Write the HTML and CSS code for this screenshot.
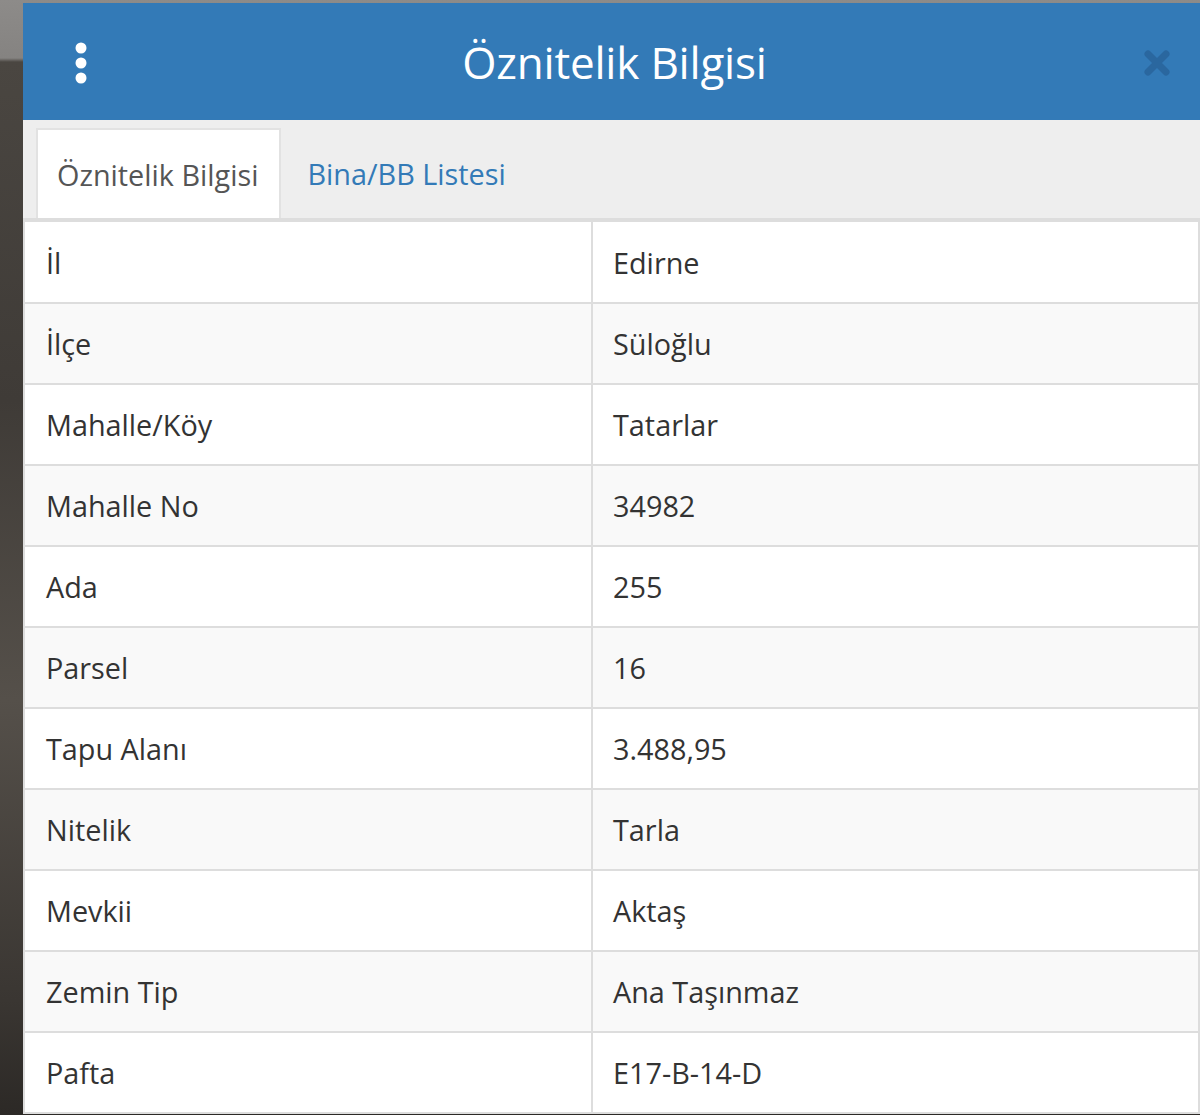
FILE: index.html
```html
<!DOCTYPE html>
<html lang="tr">
<head>
<meta charset="utf-8">
<title>Öznitelik Bilgisi</title>
<link rel="stylesheet" href="styles.css">
</head>
<body>
<div class="backdrop">
  <div class="panel">
    <div class="header">
      <button class="menu-btn" aria-label="Menü">
        <svg width="14" height="42" viewBox="0 0 14 42"><circle cx="7" cy="6" r="5.5" fill="#fff"/><circle cx="7" cy="21" r="5.5" fill="#fff"/><circle cx="7" cy="36" r="5.5" fill="#fff"/></svg>
      </button>
      <h1 class="title">Öznitelik Bilgisi</h1>
      <button class="close-btn" aria-label="Kapat">
        <svg width="28" height="28" viewBox="0 0 28 28"><path d="M5 5 L23 23 M23 5 L5 23" stroke="#2a679f" stroke-width="7" stroke-linecap="round"/></svg>
      </button>
    </div>
    <div class="tabs">
      <div class="tab active">Öznitelik Bilgisi</div>
      <div class="tab">Bina/BB Listesi</div>
    </div>
    <table class="attrs">
      <tbody>
        <tr><td>İl</td><td>Edirne</td></tr>
        <tr><td>İlçe</td><td>Süloğlu</td></tr>
        <tr><td>Mahalle/Köy</td><td>Tatarlar</td></tr>
        <tr><td>Mahalle No</td><td>34982</td></tr>
        <tr><td>Ada</td><td>255</td></tr>
        <tr><td>Parsel</td><td>16</td></tr>
        <tr><td>Tapu Alanı</td><td>3.488,95</td></tr>
        <tr><td>Nitelik</td><td>Tarla</td></tr>
        <tr><td>Mevkii</td><td>Aktaş</td></tr>
        <tr><td>Zemin Tip</td><td>Ana Taşınmaz</td></tr>
        <tr><td>Pafta</td><td>E17-B-14-D</td></tr>
      </tbody>
    </table>
  </div>
</div>
</body>
</html>
```

FILE: styles.css
```css
html, body {
  margin: 0;
  padding: 0;
  height: 100%;
  overflow: hidden;
}
body {
  font-family: "Open Sans", "Liberation Sans", sans-serif;
  color: #333;
}
.backdrop {
  height: 100%;
  box-sizing: border-box;
  padding: 3px 0 0 23px;
  background:
    linear-gradient(180deg, #8d8b89 0, #858381 58px, #4a4641 62px, #3f3b37 400px, #55504a 700px, #3a3632 1000px, #2c2926 1115px);
}
.panel {
  width: 1177px;
  background: #fff;
}
.header {
  height: 117px;
  background: #337ab7;
  display: flex;
  align-items: center;
  justify-content: space-between;
  padding: 0 29px 0 51px;
  box-sizing: border-box;
}
.menu-btn, .close-btn {
  background: none;
  border: 0;
  padding: 0;
  display: flex;
  cursor: pointer;
}
.menu-btn { margin-top: 2px; }
.close-btn { margin-top: 2px; }
.title {
  margin: 0;
  color: #fff;
  font-size: 44px;
  font-weight: 500;
  letter-spacing: -0.2px;
  line-height: 1;
  padding-right: 2px;
}
.tabs {
  height: 102px;
  background: #eee;
  box-sizing: border-box;
  border-bottom: 4px solid #ddd;
  display: flex;
  align-items: flex-end;
  padding-left: 13px;
}
.tab {
  height: 90px;
  box-sizing: border-box;
  display: flex;
  align-items: center;
  padding: 0 20px 0 22px;
  font-size: 28.8px;
  color: #337ab7;
}
.tab.active {
  background: #fff;
  color: #555;
  border: 2px solid #e2e2e2;
  border-bottom: 0;
  padding: 0 21px 0 19px;
  margin-right: 4px;
}
.attrs {
  width: 100%;
  border-collapse: collapse;
  font-size: 28.8px;
}
.attrs td {
  height: 81px;
  box-sizing: border-box;
  border: 2px solid #ddd;
  border-top: 0;
  padding: 0 20px;
  vertical-align: middle;
}
.attrs td:first-child {
  width: 568px;
  padding-left: 21px;
}
.attrs tr:nth-child(even) td {
  background: #f9f9f9;
}
```
